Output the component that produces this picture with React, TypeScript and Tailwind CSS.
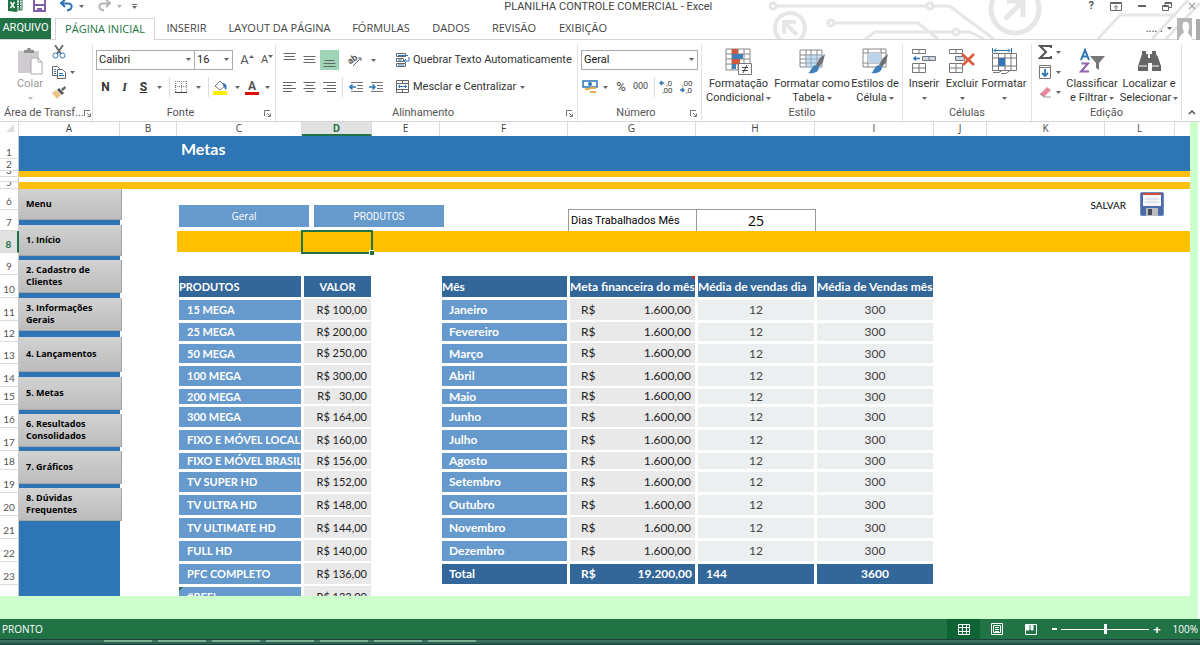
import { ReactNode } from "react";
import clsx from "clsx";

const columns = [
  { name: "A", width: "w-[101px]" },
  { name: "B", width: "w-[57px]" },
  { name: "C", width: "w-[125px]" },
  { name: "D", width: "w-[70px]", active: true },
  { name: "E", width: "w-[68px]" },
  { name: "F", width: "w-32" },
  { name: "G", width: "w-32" },
  { name: "H", width: "w-[119px]" },
  { name: "I", width: "w-[119px]" },
  { name: "J", width: "w-[53px]" },
  { name: "K", width: "w-[118px]" },
  { name: "L", width: "w-[70px]" },
];

const rowHeights = [
  "h-[23px]", "h-3", "h-[6px]", "h-[5px]", "h-[7px]", "h-[21px]", "h-[21px]", "h-[22px]",
  "h-[22px]", "h-[23px]", "h-[23px]", "h-[21px]", "h-[22px]", "h-[23px]", "h-[18px]", "h-[23px]",
  "h-[23px]", "h-[19px]", "h-[23px]", "h-[23px]", "h-[23px]", "h-[23px]", "h-[23px]", "h-[23px]",
];

const menu = [
  { label: "Menu", size: "h-[31px] mb-[5px]" },
  { label: "1. Início", size: "h-[31px] mb-1" },
  { label: "2. Cadastro de Clientes", size: "h-[33px] mb-[5px]" },
  { label: "3. Informações Gerais", size: "h-[33px] mb-[6px]" },
  { label: "4. Lançamentos", size: "h-[35px] mb-[5px]" },
  { label: "5. Metas", size: "h-[33px] mb-1" },
  { label: "6. Resultados Consolidados", size: "h-[33px] mb-1" },
  { label: "7. Gráficos", size: "h-[33px] mb-1" },
  { label: "8. Dúvidas Frequentes", size: "h-[33px]" },
];

const products = [
  ["15 MEGA", "R$ 100,00"],
  ["25 MEGA", "R$ 200,00"],
  ["50 MEGA", "R$ 250,00"],
  ["100 MEGA", "R$ 300,00"],
  ["200 MEGA", "R$   30,00"],
  ["300 MEGA", "R$ 164,00"],
  ["FIXO E MÓVEL LOCAL", "R$ 160,00"],
  ["FIXO E MÓVEL BRASIL", "R$ 156,00"],
  ["TV SUPER HD", "R$ 152,00"],
  ["TV ULTRA HD", "R$ 148,00"],
  ["TV ULTIMATE HD", "R$ 144,00"],
  ["FULL HD", "R$ 140,00"],
  ["PFC COMPLETO", "R$ 136,00"],
  ["#REF!", "R$ 132,00"],
];

const months = [
  "Janeiro", "Fevereiro", "Março", "Abril", "Maio", "Junho",
  "Julho", "Agosto", "Setembro", "Outubro", "Novembro", "Dezembro",
];

const tabs = [
  { label: "INSERIR", width: "w-[63px]" },
  { label: "LAYOUT DA PÁGINA", width: "w-[123px]" },
  { label: "FÓRMULAS", width: "w-20" },
  { label: "DADOS", width: "w-[60px]" },
  { label: "REVISÃO", width: "w-[66px]" },
  { label: "EXIBIÇÃO", width: "w-[72px]" },
];

const windows = [1, 2, 3, 4, 5, 6, 7];

function Caret({ className }: { className?: string }) {
  return (
    <svg viewBox="0 0 5 3" className={clsx("w-[5px] h-[3px] shrink-0", className)} fill="#666">
      <path d="M0 0h5L2.5 3z" />
    </svg>
  );
}

function CaretButton({ label }: { label: string }) {
  return (
    <button aria-label={label} className="w-3 h-5 flex items-center justify-center shrink-0">
      <Caret />
    </button>
  );
}

function Divider() {
  return <span className="w-px h-5 bg-[#dcdcdc] shrink-0" />;
}

function Tool({ label, className, children }: { label: string; className?: string; children: ReactNode }) {
  return (
    <button aria-label={label} className={clsx("h-5 flex items-center justify-center shrink-0", className ?? "w-5")}>
      {children}
    </button>
  );
}

interface GroupProps {
  name: string;
  width: string;
  launcher?: boolean;
  children: ReactNode;
}

function Group({ name, width, launcher, children }: GroupProps) {
  return (
    <section aria-label={name} className={clsx("flex flex-col shrink-0 border-r border-[#e1e1e1] mt-1", width)}>
      <div className="flex-1 min-h-0">{children}</div>
      <div className="h-[15px] flex items-center px-1 text-[11px] text-[#555]">
        <span className="flex-1 text-center whitespace-nowrap">{name}</span>
        {launcher && (
          <button aria-label={`Opções de ${name}`}>
            <svg viewBox="0 0 7 7" className="w-[7px] h-[7px]" fill="none" stroke="#777">
              <path d="M.5 6V.5H6M3 3l3 3M6.5 3.5v3h-3" />
            </svg>
          </button>
        )}
      </div>
    </section>
  );
}

interface BigButtonProps {
  lines: string[];
  width: string;
  muted?: boolean;
  children: ReactNode;
}

function BigButton({ lines, width, muted, children }: BigButtonProps) {
  return (
    <button className={clsx("flex flex-col items-center shrink-0 text-[11px] leading-[14px] whitespace-nowrap", width, muted ? "text-[#999]" : "text-[#333]")}>
      <span className="h-[30px] mb-px flex items-center">{children}</span>
      <span>{lines[0]}</span>
      <span className="h-[14px] flex items-center gap-[2px]">
        {lines[1]}
        <Caret className={muted ? "opacity-40" : undefined} />
      </span>
    </button>
  );
}

function Lines({ widths, top }: { widths: number[]; top: number }) {
  return (
    <svg viewBox="0 0 14 16" className="w-[14px] h-4" stroke="#666">
      {widths.map((w, i) => (
        <path key={i} d={`M${(13 - w) / 2} ${top + i * 3}.5h${w}`} />
      ))}
    </svg>
  );
}

function SideLines({ side }: { side: "left" | "right" }) {
  const d = side === "left" ? "M0 3.5h13M0 6.5h9M0 9.5h13M0 12.5h9" : "M0 3.5h13M4 6.5h9M0 9.5h13M4 12.5h9";
  return (
    <svg viewBox="0 0 14 16" className="w-[14px] h-4" stroke="#666">
      <path d={d} />
    </svg>
  );
}

function IndentIcon({ right }: { right?: boolean }) {
  return (
    <svg viewBox="0 0 15 12" className="w-[15px] h-3" fill="none">
      <path d="M2 1.5h12M8 4.5h6M8 7.5h6M2 10.5h12" stroke="#777" />
      <path d={right ? "M0 6h6M3.5 3.5L6 6 3.5 8.5" : "M7 6H1M3.5 3.5L1 6l2.5 2.5"} stroke="#2e75b6" strokeWidth="1.6" />
    </svg>
  );
}

function Brush() {
  return (
    <g>
      <path d="M26 6l-2 8-4 5-3-2 4-7z" fill="#707070" />
      <path d="M17 17l3 2c0 5-5 7-11 6 3-1 3-7 8-8z" fill="#3f80b9" />
    </g>
  );
}

function Select({ label, value, className }: { label: string; value: string; className: string }) {
  return (
    <span className={clsx("relative flex h-5 shrink-0", className)}>
      <select aria-label={label} className="appearance-none w-full border border-[#ababab] bg-white pl-[2px] text-[11px] text-[#222]">
        <option>{value}</option>
      </select>
      <Caret className="absolute right-1 top-2" />
    </span>
  );
}

function TitleBar() {
  return (
    <header className="relative">
      <svg className="absolute right-0 top-0 w-[440px] h-[39px]" viewBox="760 0 440 39" fill="none" stroke="#e6e6e6" strokeWidth="3">
        <circle cx="773" cy="6" r="3" />
        <path d="M777 6h149M934 6h16l14 11 30 22" />
        <circle cx="930" cy="6" r="3" />
        <circle cx="831" cy="23" r="3" />
        <path d="M835 23h83l20 16M865 39l10-7h77M960 32h10l14 7" />
        <circle cx="956" cy="32" r="3" />
        <circle cx="790" cy="28" r="15" strokeWidth="4" />
        <path d="M797 35l-12-12M784 34V22h12" strokeWidth="4" />
        <circle cx="1015" cy="9" r="24" strokeWidth="5" />
        <path d="M1005 19l17-17M1007 1h16v16" strokeWidth="5" />
        <path d="M1098 39l22-24h56M1152 39l36-39M1166 39l34-36" />
      </svg>
      <div className="relative h-[18px] flex items-start">
        <div className="flex w-[140px] pl-2 gap-[10px] h-3">
          <svg viewBox="0 0 15 12" className="w-[15px] h-3">
            <path d="M8 0h6v10H8z" fill="#fff" stroke="#217346" />
            <path d="M9 3h4M9 5.500h4M9 8h4M11.500 0v10" stroke="#217346" />
            <path d="M0 0l9-1v13l-9-1z" fill="#217346" />
            <path d="M2.500 2l4 6M6.500 2l-4 6" stroke="#fff" strokeWidth="1.400" />
          </svg>
          <button aria-label="Salvar" className="h-3">
            <svg viewBox="0 0 13 12" className="w-[13px] h-3" fill="none" stroke="#8060a8" strokeWidth="2">
              <path d="M1-1v12h11V-1M1 5h11" />
              <path d="M5 11V9h3v2" fill="#8060a8" />
            </svg>
          </button>
          <button aria-label="Desfazer" className="h-3 flex items-center gap-[6px] pl-1">
            <svg viewBox="0 0 13 12" className="w-[13px] h-3" fill="none" stroke="#2e75b6" strokeWidth="2">
              <path d="M5 0L1 3l4 4M1 3.500h7c5 0 5 6-1 7" />
            </svg>
            <Caret />
          </button>
          <button aria-label="Refazer" className="h-3 flex items-center gap-[6px] pl-1">
            <svg viewBox="0 0 13 12" className="w-[13px] h-3" fill="none" stroke="#b5b5b5" strokeWidth="2">
              <path d="M8 0l4 3-4 4M12 3.500H5c-5 0-5 6 1 7" />
            </svg>
            <Caret className="opacity-50" />
          </button>
          <button aria-label="Personalizar" className="h-3 flex flex-col items-center justify-center gap-px">
            <span className="w-[5px] h-px bg-[#666]" />
            <Caret />
          </button>
        </div>
        <h1 className="flex-1 text-center text-[11px] leading-[14px] text-[#444] pr-3 font-['Roboto',sans-serif]">
          PLANILHA CONTROLE COMERCIAL - Excel
        </h1>
        <div className="flex items-center h-3 gap-4 pr-1 text-[#555]">
          <button aria-label="Ajuda" className="text-[11px] leading-3 font-bold font-['Roboto',sans-serif]">?</button>
          <button aria-label="Exibição da faixa">
            <svg viewBox="0 0 12 9" className="w-3 h-[9px]" fill="none" stroke="#666">
              <path d="M.5.5h11v8H.5zM0 1.500h12M6 8V4M4 5.500l2-2 2 2" />
            </svg>
          </button>
          <button aria-label="Minimizar" className="w-2 h-[2px] bg-[#666]" />
          <button aria-label="Restaurar">
            <svg viewBox="0 0 10 9" className="w-[10px] h-[9px]" fill="none" stroke="#666">
              <path d="M.5 3.500h6v5h-6zM3 3V.5h6.500v5H7M3 1.500h7M0 4.500h7" />
            </svg>
          </button>
          <button aria-label="Fechar">
            <svg viewBox="0 0 8 8" className="w-2 h-2" stroke="#aaa" strokeWidth="1.500">
              <path d="M1 1l6 6M7 1L1 7" />
            </svg>
          </button>
        </div>
      </div>
      <nav className="relative h-[22px] flex items-center text-[11px] text-[#444] border-b border-[#d5d5d5]">
        <button className="w-[51px] h-full bg-[#217346] text-white shrink-0 whitespace-nowrap font-['Roboto',sans-serif]">ARQUIVO</button>
        <button className="w-[100px] h-[22px] ml-1 bg-white border border-b-0 border-[#d5d5d5] text-[#217346] shrink-0 whitespace-nowrap">
          PÁGINA INICIAL
        </button>
        {tabs.map((tab) => (
          <button key={tab.label} className={clsx("shrink-0 whitespace-nowrap", tab.width)}>
            {tab.label}
          </button>
        ))}
        <div className="ml-auto flex items-center gap-1 h-full">
          <span>.... .</span>
          <Caret />
          <svg viewBox="0 0 24 22" className="w-6 h-[22px]">
            <path d="M1 0h15v22H1z" fill="#b5b5b5" />
            <path d="M3 22c0-5 3-5 5-8-3-7-1-11 2-10 4 0 4 6 2 10 0 3 4 3 4 8z" fill="#fff" />
            <path d="M20 1h4v21h-4z" fill="#aaa" />
          </svg>
        </div>
      </nav>
    </header>
  );
}

function Ribbon() {
  return (
    <div className="h-[82px] flex border-b border-[#d5d5d5] bg-white font-['Roboto',sans-serif]">
      <Group name="Área de Transf..." width="w-[93px]" launcher>
        <div className="flex pl-3 pt-[2px] gap-1">
          <BigButton lines={["Colar", ""]} width="w-9" muted>
            <svg viewBox="0 0 25 27" className="w-[25px] h-[27px]">
              <path d="M0 3h21v22H0z" fill="#cfcbd0" />
              <path d="M6 5V2h3c0-3 4-3 4 0h3v3z" fill="#909090" />
              <path d="M13 10h7l4 4v12H13z" fill="#fff" stroke="#aaa" />
              <path d="M20 10v4h4" fill="none" stroke="#aaa" />
            </svg>
          </BigButton>
          <div className="flex flex-col">
            <Tool label="Recortar" className="w-[14px] -mt-1">
              <svg viewBox="0 0 14 14" className="w-[14px] h-[14px]" fill="none">
                <path d="M3 0l6 9M11 0L5 9" stroke="#666" strokeWidth="1.800" />
                <circle cx="3.500" cy="10.500" r="2.500" stroke="#2e75b6" />
                <circle cx="10.500" cy="10.500" r="2.500" stroke="#2e75b6" />
              </svg>
            </Tool>
            <div className="flex">
              <Tool label="Copiar" className="w-[14px]">
                <svg viewBox="0 0 14 13" className="w-[14px] h-[13px]" fill="#fff" stroke="#666">
                  <path d="M.5.5h5l2 2v7h-7z" />
                  <path d="M5.500 3.500h5l3 3v6h-8z" />
                  <path d="M2 3.500h2M2 5.500h2M2 7.500h2M7 7.500h4M7 9.500h5" stroke="#2e75b6" />
                </svg>
              </Tool>
              <CaretButton label="Opções de cópia" />
            </div>
            <Tool label="Pincel de formatação" className="w-[14px]">
              <svg viewBox="0 0 14 13" className="w-[14px] h-[13px]">
                <path d="M0 7l4-3 5 5-4 4z" fill="#eac282" />
                <path d="M5 4l2-2 5 5-2 2z" fill="#555" />
                <path d="M9 3l4-3 1 2-3 3z" fill="#666" />
              </svg>
            </Tool>
          </div>
        </div>
      </Group>

      <Group name="Fonte" width="w-[183px]" launcher>
        <div className="flex flex-col gap-[7px] pt-[6px] pl-[3px]">
          <div className="flex">
            <Select label="Fonte" value="Calibri" className="w-[99px]" />
            <Select label="Tamanho da fonte" value="16" className="w-[39px] -ml-px" />
            <Tool label="Aumentar fonte" className="w-5 ml-1 text-[13px] text-[#555]">
              A<Caret className="rotate-180 mb-2" />
            </Tool>
            <Tool label="Diminuir fonte" className="w-5 text-[11px] text-[#555]">
              A<Caret className="mb-2" />
            </Tool>
          </div>
          <div className="flex items-center text-[12px] text-[#333]">
            <Tool label="Negrito" className="w-[19px]"><b>N</b></Tool>
            <Tool label="Itálico" className="w-[19px]"><i className="font-['Liberation_Serif',serif] font-bold">I</i></Tool>
            <Tool label="Sublinhado" className="w-[19px]"><b className="underline">S</b></Tool>
            <CaretButton label="Tipos de sublinhado" />
            <span className="w-1" />
            <Divider />
            <Tool label="Bordas" className="w-[22px]">
              <svg viewBox="0 0 12 12" className="w-3 h-3" fill="none" stroke="#888">
                <path d="M.5 0v11M6.500 0v11M11.500 0v11M0 .5h12M0 5.500h12" strokeDasharray="1 1" />
                <path d="M0 11.500h12" stroke="#444" />
              </svg>
            </Tool>
            <CaretButton label="Opções de borda" />
            <span className="w-1" />
            <Divider />
            <Tool label="Cor de preenchimento" className="w-[22px]">
              <svg viewBox="0 0 16 15" className="w-4 h-[15px]">
                <path d="M3 6l5-5 5 5-5 4z" fill="#fff" stroke="#777" />
                <path d="M11 3c4 1 4 4 3 7-2-1-1-4-3-4z" fill="#2e75b6" />
                <path d="M1 11h14v4H1z" fill="#ffef00" />
              </svg>
            </Tool>
            <CaretButton label="Mais cores de preenchimento" />
            <Tool label="Cor da fonte" className="w-[18px] flex-col text-[12px] leading-3 font-bold text-[#555]">
              A<span className="w-[14px] h-[3px] bg-[#e30b0b]" />
            </Tool>
            <CaretButton label="Mais cores da fonte" />
          </div>
        </div>
      </Group>

      <Group name="Alinhamento" width="w-[302px]" launcher>
        <div className="flex pt-[6px] pl-1">
          <div className="flex flex-col gap-[7px] w-[116px]">
            <div className="flex">
              <Tool label="Alinhar em cima"><Lines widths={[12, 10, 12]} top={1} /></Tool>
              <Tool label="Alinhar no meio"><Lines widths={[12, 10, 12]} top={4} /></Tool>
              <Tool label="Alinhar embaixo" className="w-[19px] bg-[#9fd5b7]"><Lines widths={[10, 12, 12]} top={8} /></Tool>
              <Tool label="Orientação" className="w-6 ml-1">
                <svg viewBox="0 0 15 14" className="w-[15px] h-[14px] overflow-visible" fill="none" stroke="#666">
                  <text x="0" y="9" fontSize="9" fontWeight="bold" fill="#555" stroke="none" transform="rotate(-35 5 7)">ab</text>
                  <path d="M5 13l8-8M10 5h3v3" />
                </svg>
              </Tool>
              <CaretButton label="Opções de orientação" />
            </div>
            <div className="flex">
              <Tool label="Alinhar à esquerda"><SideLines side="left" /></Tool>
              <Tool label="Centralizar"><Lines widths={[12, 8, 12, 8]} top={3} /></Tool>
              <Tool label="Alinhar à direita"><SideLines side="right" /></Tool>
              <span className="w-[2px]" />
              <Divider />
              <Tool label="Diminuir recuo" className="w-[26px]"><IndentIcon /></Tool>
              <Tool label="Aumentar recuo" className="w-[15px]"><IndentIcon right /></Tool>
            </div>
          </div>
          <div className="flex flex-col gap-[7px] text-[11px] text-[#333]">
            <button className="h-5 flex items-center gap-[3px] whitespace-nowrap">
              <svg viewBox="0 0 14 14" className="w-[14px] h-[14px]" fill="none" stroke="#666">
                <path d="M.5.5h9v3h-9zM.5 5.500h7v3h-7zM.5 10.500h9v3h-9z" />
                <path d="M2 2.500h10M13 4v4H8M10 6L8 8l2 2M2 7h4M2 12h6" stroke="#2e75b6" />
              </svg>
              Quebrar Texto Automaticamente
            </button>
            <div className="flex">
              <button className="h-5 flex items-center gap-[3px] whitespace-nowrap">
                <svg viewBox="0 0 14 14" className="w-[14px] h-[14px]" fill="none" stroke="#666">
                  <path d="M.5.5h12v12H.5zM.5 3.500h12M.5 9.500h12M6.500 0v3M6.500 10v3" />
                  <path d="M2 6.500h9M4 5L2.500 6.500 4 8M9 5l1.500 1.500L9 8" stroke="#2e75b6" />
                </svg>
                Mesclar e Centralizar
              </button>
              <CaretButton label="Opções de mesclagem" />
            </div>
          </div>
        </div>
      </Group>

      <Group name="Número" width="w-[124px]" launcher>
        <div className="flex flex-col gap-[7px] pt-[6px] px-[3px]">
          <Select label="Formato de número" value="Geral" className="w-full" />
          <div className="flex items-center text-[11px] text-[#444]">
            <Tool label="Formato de contabilização" className="w-[18px]">
              <svg viewBox="0 0 16 14" className="w-4 h-[14px]">
                <path d="M1 1h14v6H1z" fill="#fff" stroke="#2e75b6" strokeWidth="1.500" />
                <circle cx="8" cy="4" r="2" fill="#2e75b6" />
                <path d="M8 7h6v2H8zM3 8h5v2H3zM8 11h6v2H8z" fill="#e5ad58" />
              </svg>
            </Tool>
            <CaretButton label="Mais moedas" />
            <Tool label="Porcentagem" className="w-5 text-[13px]">%</Tool>
            <Tool label="Milhares" className="w-[19px] text-[9px]">000</Tool>
            <span className="w-1" />
            <Divider />
            <Tool label="Aumentar casas" className="w-[21px]">
              <svg viewBox="0 0 14 14" className="w-[14px] h-[14px] text-[8px] overflow-visible" fill="#444">
                <path d="M5 3H1M3 1L1 3l2 2" fill="none" stroke="#2e75b6" strokeWidth="1.300" />
                <text x="7" y="6">,0</text>
                <text x="3" y="13">,00</text>
              </svg>
            </Tool>
            <Tool label="Diminuir casas">
              <svg viewBox="0 0 14 14" className="w-[14px] h-[14px] text-[8px] overflow-visible" fill="#444">
                <path d="M1 10h4M3 8l2 2-2 2" fill="none" stroke="#2e75b6" strokeWidth="1.300" />
                <text x="3" y="6">,00</text>
                <text x="7" y="13">,0</text>
              </svg>
            </Tool>
          </div>
        </div>
      </Group>

      <Group name="Estilo" width="w-[201px]">
        <div className="flex pt-[2px]">
          <BigButton lines={["Formatação", "Condicional"]} width="w-[73px]">
            <svg viewBox="0 0 27 27" className="w-[27px] h-[27px]">
              <path d="M1 1h24v21H1zM1 6h24M1 11h24M1 16h24M7 1v21M13 1v21M19 1v21" fill="#fff" stroke="#888" />
              <path d="M7 1h6v5H7zM7 11h8v5H7z" fill="#d2573b" />
              <path d="M7 6h11v5H7zM7 16h4v5H7z" fill="#3f80b9" />
              <path d="M13.500 15.500h13v11h-13z" fill="#fff" stroke="#777" />
              <path d="M17 19.500h6M17 22.500h6M22 17l-4 8" stroke="#444" />
            </svg>
          </BigButton>
          <BigButton lines={["Formatar como", "Tabela"]} width="w-[74px]">
            <svg viewBox="0 0 27 27" className="w-[27px] h-[27px]">
              <path d="M1 2h22v17H1zM1 7h22M1 11h22M1 15h22M7 2v17M12 2v17M18 2v17" fill="#fff" stroke="#888" />
              <path d="M7 7h16v12H7z" fill="#9dc3e6" fillOpacity=".6" />
              <Brush />
            </svg>
          </BigButton>
          <BigButton lines={["Estilos de", "Célula"]} width="w-[52px]">
            <svg viewBox="0 0 27 27" className="w-[27px] h-[27px]">
              <path d="M1 1h23v18H1zM1 5h23M1 15h23M6 1v18M19 1v18" fill="#fff" stroke="#888" />
              <path d="M6 5h13v10H6z" fill="#bcd3ea" />
              <Brush />
            </svg>
          </BigButton>
        </div>
      </Group>

      <Group name="Células" width="w-[129px]">
        <div className="flex pt-[2px] pl-[2px]">
          <BigButton lines={["Inserir", ""]} width="w-[38px]">
            <svg viewBox="0 0 24 26" className="w-6 h-[26px]" fill="#fff" stroke="#777">
              <path d="M.5 1.500h13v4H.5zM7 1.500v4M.5 15.500h13v9H.5zM7 15.500v9M.5 20h13" />
              <path d="M10.500 8.500h13v4h-13zM17 8.500v4" fill="#c9d9ea" />
              <path d="M8 10.500H2M4 8.500l-2 2 2 2" stroke="#2e75b6" strokeWidth="1.500" fill="none" />
            </svg>
          </BigButton>
          <BigButton lines={["Excluir", ""]} width="w-[38px]">
            <svg viewBox="0 0 26 26" className="w-[26px] h-[26px]" fill="#fff" stroke="#777">
              <path d="M.5 1.500h13v4H.5zM7 1.500v4M.5 15.500h13v9H.5zM7 15.500v9M.5 20h13" />
              <path d="M6.500 8.500h9v4h-9z" fill="#c9d9ea" />
              <path d="M13 6l12 11M25 6L14 17" stroke="#dc5838" strokeWidth="2.500" />
            </svg>
          </BigButton>
          <BigButton lines={["Formatar", ""]} width="w-[46px]">
            <svg viewBox="0 0 25 27" className="w-[25px] h-[27px]" fill="#fff" stroke="#777">
              <path d="M.5 5.500h24v17H.5zM.5 10h24M.5 18h24M6.500 5v17M13 5v17M19 5v17M1 24.500h6l3-2M9 25.500h5l4-3" />
              <path d="M7 10h6v8H7z" fill="#3273b8" stroke="none" />
              <path d="M.5 0v5M19.500 0v5M2 2.500h16M4 .5L2 2.500l2 2M16 .5l2 2-2 2" stroke="#2e75b6" fill="none" />
            </svg>
          </BigButton>
        </div>
      </Group>

      <Group name="Edição" width="w-[150px]">
        <div className="flex pt-[2px] pl-[6px]">
          <div className="w-[26px] flex flex-col">
            <div className="flex -mt-1">
              <Tool label="Soma" className="w-[14px]">
                <svg viewBox="0 0 14 14" className="w-[14px] h-[14px]" fill="none" stroke="#555" strokeWidth="2">
                  <path d="M13 3V1H2l6 6-6 6h11v-2" />
                </svg>
              </Tool>
              <CaretButton label="Mais funções" />
            </div>
            <div className="flex">
              <Tool label="Preencher" className="w-[14px]">
                <svg viewBox="0 0 12 14" className="w-3 h-[14px]" fill="#fff" stroke="#777">
                  <path d="M.5.5h11v13H.5zM0 2.500h12" />
                  <path d="M6 4v7M3 8l3 3 3-3" stroke="#2e75b6" strokeWidth="1.800" fill="none" />
                </svg>
              </Tool>
              <CaretButton label="Opções de preenchimento" />
            </div>
            <div className="flex">
              <Tool label="Limpar" className="w-[14px]">
                <svg viewBox="0 0 13 12" className="w-[13px] h-3">
                  <path d="M1 8l7-7 4 3-7 7z" fill="#e8899a" />
                  <path d="M1 8l4 3h7" stroke="#999" fill="none" />
                </svg>
              </Tool>
              <CaretButton label="Opções de limpeza" />
            </div>
          </div>
          <BigButton lines={["Classificar", "e Filtrar"]} width="w-[56px]">
            <svg viewBox="0 0 26 26" className="w-[26px] h-[26px]" fill="none">
              <path d="M2 12L6 2l4 10M3.500 8.500h5" stroke="#2e75b6" strokeWidth="2" />
              <path d="M2.500 15.500H9l-7 8h8" stroke="#9262ab" strokeWidth="2" />
              <path d="M11 8h15l-6 7v7l-3-2v-5z" fill="#777" />
            </svg>
          </BigButton>
          <BigButton lines={["Localizar e", "Selecionar"]} width="w-[58px]">
            <svg viewBox="0 0 24 22" className="w-6 h-[22px]" fill="#666">
              <path d="M5 1h4v3h2v4h2V4h2V1h4v3l2 3 3 9v5h-9v-8h-4v8H1v-5l3-9 1-3z" />
              <path d="M2 16h8M14 16h8" stroke="#fff" />
            </svg>
          </BigButton>
        </div>
      </Group>
      <button aria-label="Recolher faixa" className="ml-auto mr-1 mb-[6px] self-end">
        <svg viewBox="0 0 8 5" className="w-2 h-[5px]" fill="none" stroke="#555" strokeWidth="1.500">
          <path d="M1 4l3-3 3 3" />
        </svg>
      </button>
    </div>
  );
}

function RowHeaders() {
  return (
    <div className="w-[19px] shrink-0 bg-white text-[10px] leading-3 text-[#555]">
      {rowHeights.map((height, i) => (
        <div
          key={i}
          className={clsx(
            "flex items-end justify-center overflow-hidden border-b border-[#dcdcdc]",
            height,
            i > 4 && "pb-[2px]",
            i === 7 ? "bg-[#e1e1e1] text-[#217346] font-bold border-r-2 border-r-[#217346]" : "border-r border-r-[#c8c8c8]"
          )}
        >
          {i !== 3 && i + 1}
        </div>
      ))}
    </div>
  );
}

const blue = "bg-[#6699cc] text-white font-bold border-t-2 border-b border-l-2 border-r border-white";
const grey = "bg-[#e9e9e9] text-[#222] border-t border-b border-l-2 border-r border-white";
const pale = "bg-[#eceff0] text-[#444] text-center border-t-2 border-b border-l-2 border-r border-white";
const dark = "bg-[#336699] text-white font-bold border-t-2 border-b border-l-2 border-r border-white";
const head = "bg-[#336699] text-white font-bold border-y border-l-2 border-r border-white whitespace-nowrap";

function ProductsTable() {
  return (
    <table className="table-fixed w-[195px] border-separate border-spacing-0 text-[11px] leading-[14px] shrink-0 self-start">
      <thead>
        <tr className="h-[23px]">
          <th className={clsx(head, "w-[125px] p-0 text-left")}>PRODUTOS</th>
          <th className={clsx(head, "w-[70px] p-0")}>VALOR</th>
        </tr>
      </thead>
      <tbody>
        {products.map(([name, price], i) => (
          <tr key={name} className={rowHeights[i + 10]}>
            <td className={clsx(blue, "relative p-0 pl-2 whitespace-nowrap")}>
              {name === "#REF!" && <span className="absolute left-0 top-0 border-[2px] border-[#217346] border-r-transparent border-b-transparent" />}
              {name}
            </td>
            <td className={clsx(grey, "p-0 pr-1 text-right whitespace-pre")}>{price}</td>
          </tr>
        ))}
      </tbody>
    </table>
  );
}

function GoalsTable() {
  return (
    <table className="table-fixed w-[494px] ml-[68px] border-separate border-spacing-0 text-[12px] leading-[14px] shrink-0 self-start">
      <thead>
        <tr className="h-[23px] text-left">
          <th className={clsx(head, "w-32 p-0")}>Mês</th>
          <th className={clsx(head, "relative w-32 p-0")}>
            Meta financeira do mês
            <span className="absolute right-0 top-0 border-[2px] border-[#e02020] border-l-transparent border-b-transparent" />
          </th>
          <th className={clsx(head, "w-[119px] p-0")}>Média de vendas dia</th>
          <th className={clsx(head, "w-[119px] p-0")}>Média de Vendas mês</th>
        </tr>
      </thead>
      <tbody>
        {months.map((month, i) => (
          <tr key={month} className={rowHeights[i + 10]}>
            <td className={clsx(blue, "p-0 pl-[7px]")}>{month}</td>
            <td className={clsx(grey, "p-0 pl-[11px] pr-1")}>
              <div className="flex justify-between"><span>R$</span><span>1.600,00</span></div>
            </td>
            <td className={clsx(pale, "p-0")}>12</td>
            <td className={clsx(pale, "p-0")}>300</td>
          </tr>
        ))}
      </tbody>
      <tfoot>
        <tr className="h-[23px]">
          <td className={clsx(dark, "p-0 pl-[7px]")}>Total</td>
          <td className={clsx(dark, "p-0 pl-[11px] pr-[3px]")}>
            <div className="flex justify-between"><span>R$</span><span>19.200,00</span></div>
          </td>
          <td className={clsx(dark, "p-0 pl-2")}>144</td>
          <td className={clsx(dark, "p-0 text-center")}>3600</td>
        </tr>
      </tfoot>
    </table>
  );
}

function Sheet() {
  return (
    <div className="flex-1 min-h-0 flex flex-col overflow-hidden bg-white">
      <div className="h-[14px] shrink-0 flex text-[10px] leading-[13px] text-center text-[#444] font-['Open_Sans',sans-serif]">
        <div className="w-[19px] shrink-0 flex justify-end items-end pr-1 pb-1 border-r border-[#dcdcdc]">
          <svg viewBox="0 0 8 8" className="w-2 h-2" fill="#ddd"><path d="M8 0v8H0z" /></svg>
        </div>
        {columns.map((col) => (
          <div
            key={col.name}
            className={clsx("shrink-0 border-r border-[#dcdcdc]", col.width, col.active && "bg-[#e1e1e1] text-[#217346] font-bold border-b-2 border-b-[#217346]")}
          >
            {col.name}
          </div>
        ))}
      </div>
      <div className="flex-1 min-h-0 flex overflow-hidden font-['Lato',sans-serif]">
        <RowHeaders />
        <div className="flex-1 min-w-0 flex flex-col">
          <div className="h-[35px] shrink-0 bg-[#2e75b6] pl-[162px]">
            <h2 className="text-[16px] leading-[26px] font-bold text-white">Metas</h2>
          </div>
          <div className="h-[6px] shrink-0 bg-[#fcc010]" />
          <div className="h-[5px] shrink-0" />
          <div className="h-[7px] shrink-0 bg-[#fcc010]" />
          <div className="flex-1 min-h-0 flex">
            <nav className="w-[101px] shrink-0 bg-[#2e75b6] flex flex-col">
              {menu.map((item) => (
                <button
                  key={item.label}
                  className={clsx(
                    "relative w-[103px] shrink-0 pl-[7px] pr-6 text-left text-[9px] leading-3 font-bold text-black bg-linear-to-b from-[#d2d2d2] to-[#bcbcbc] border-r border-b border-[#a5a5a5] font-['Open_Sans',sans-serif]",
                    item.size
                  )}
                >
                  {item.label}
                </button>
              ))}
            </nav>
            <main className="flex-1 min-w-0 pl-[57px]">
              <div className="h-[42px] flex pl-[2px]">
                <button className="w-[130px] h-[22px] mt-4 mr-[5px] bg-[#6699cc] text-white text-[10px] font-['Open_Sans',sans-serif]">Geral</button>
                <button className="w-[130px] h-[22px] mt-4 bg-[#6699cc] text-white text-[10px] font-['Roboto',sans-serif]">PRODUTOS</button>
                <div className="w-[248px] h-[22px] ml-[124px] self-end flex items-center border border-[#999] border-b-0 text-black font-['Open_Sans',sans-serif]">
                  <label htmlFor="dias" className="w-32 h-full pl-[2px] border-r border-[#999] text-[11px] leading-[22px] whitespace-nowrap font-['Roboto',sans-serif]">
                    Dias Trabalhados Mês
                  </label>
                  <input id="dias" defaultValue="25" className="flex-1 min-w-0 text-center text-[14px] leading-5" />
                </div>
                <button className="ml-auto mr-[26px] h-8 flex items-center gap-[14px] text-[10px] text-black">
                  SALVAR
                  <svg viewBox="0 0 24 25" className="w-6 h-[25px] mb-px">
                    <rect x=".5" y=".5" width="23" height="23" rx="1" fill="#4a6da8" stroke="#718bb8" />
                    <path d="M3 1h18v13H3z" fill="#f4f6f8" />
                    <path d="M3 1h18v2H3z" fill="#d34a42" />
                    <path d="M5 7h14M5 10h14" stroke="#cdd5df" />
                    <path d="M6 16h12v8H6z" fill="#babec2" />
                    <path d="M8 17h4v6H8z" fill="#454c56" />
                  </svg>
                </button>
              </div>
              <div className="h-[21px] mb-[23px] bg-[#ffc000]">
                <div className="relative w-[72px] h-6 ml-[124px] top-[-1px] border-2 border-[#217346]">
                  <span className="absolute -right-[3px] -bottom-[3px] w-[5px] h-[5px] bg-[#217346] border-l border-t border-white" />
                </div>
              </div>
              <div className="flex">
                <ProductsTable />
                <GoalsTable />
              </div>
            </main>
          </div>
        </div>
      </div>
    </div>
  );
}

function StatusBar() {
  return (
    <footer className="shrink-0">
      <div className="h-5 flex items-center bg-[#217346] text-white text-[10px]">
        <span className="pl-[2px] flex-1">PRONTO</span>
        <button aria-label="Normal" className="w-[33px] h-5 flex items-center justify-center bg-[#0e6233]">
          <svg viewBox="0 0 12 11" className="w-3 h-[11px]" fill="none" stroke="#fff">
            <path d="M.5.5h11v10H.5zM4.500 0v11M8.500 0v11M0 3.500h12M0 7.500h12" />
          </svg>
        </button>
        <button aria-label="Layout da página" className="w-[34px] h-5 flex items-center justify-center">
          <svg viewBox="0 0 12 12" className="w-3 h-3" fill="none" stroke="#fff">
            <path d="M.5.5h11v11H.5zM2.500 2.500h7v7h-7zM4 4.500h4M4 6.500h4M4 8.500h4" />
          </svg>
        </button>
        <button aria-label="Quebra de página" className="w-[34px] h-5 flex items-center justify-center">
          <svg viewBox="0 0 12 11" className="w-3 h-[11px]" fill="#fff" stroke="#fff">
            <path d="M.5.5h11v10H.5z" fill="none" />
            <path d="M1 1h3v5H1zM6 1h2v5H6z" />
          </svg>
        </button>
        <button aria-label="Diminuir zoom" className="w-[5px] h-[2px] ml-1 bg-white" />
        <input
          type="range"
          aria-label="Zoom"
          defaultValue="50"
          className="appearance-none w-[88px] h-px mx-1 bg-white [&::-webkit-slider-thumb]:appearance-none [&::-webkit-slider-thumb]:w-[3px] [&::-webkit-slider-thumb]:h-[10px] [&::-webkit-slider-thumb]:bg-white"
        />
        <button aria-label="Aumentar zoom" className="text-[13px] font-bold leading-4">+</button>
        <span className="pl-3 pr-[2px]">100%</span>
      </div>
      <div className="h-[6px] bg-[#2b6350] border-t border-[#1b3f3a] flex flex-col justify-between">
        <div className="h-[2px] flex gap-[6px] pl-[104px] bg-[#3f7366]">
          {windows.map((w) => (
            <span key={w} className="w-12 h-[2px] bg-[#7fae93]" />
          ))}
        </div>
        <div className="h-px bg-[#1d4540]" />
      </div>
    </footer>
  );
}

export default function App() {
  return (
    <div className="h-screen flex flex-col overflow-hidden bg-white font-['Open_Sans',sans-serif]">
      <TitleBar />
      <Ribbon />
      <div className="flex-1 min-h-0 flex">
        <div className="flex-1 min-w-0 flex flex-col pb-[23px] bg-[#ccffcc]">
          <Sheet />
        </div>
        <div className="w-2 bg-[#ccffcc]" />
        <div className="w-[2px] bg-white" />
      </div>
      <StatusBar />
    </div>
  );
}
